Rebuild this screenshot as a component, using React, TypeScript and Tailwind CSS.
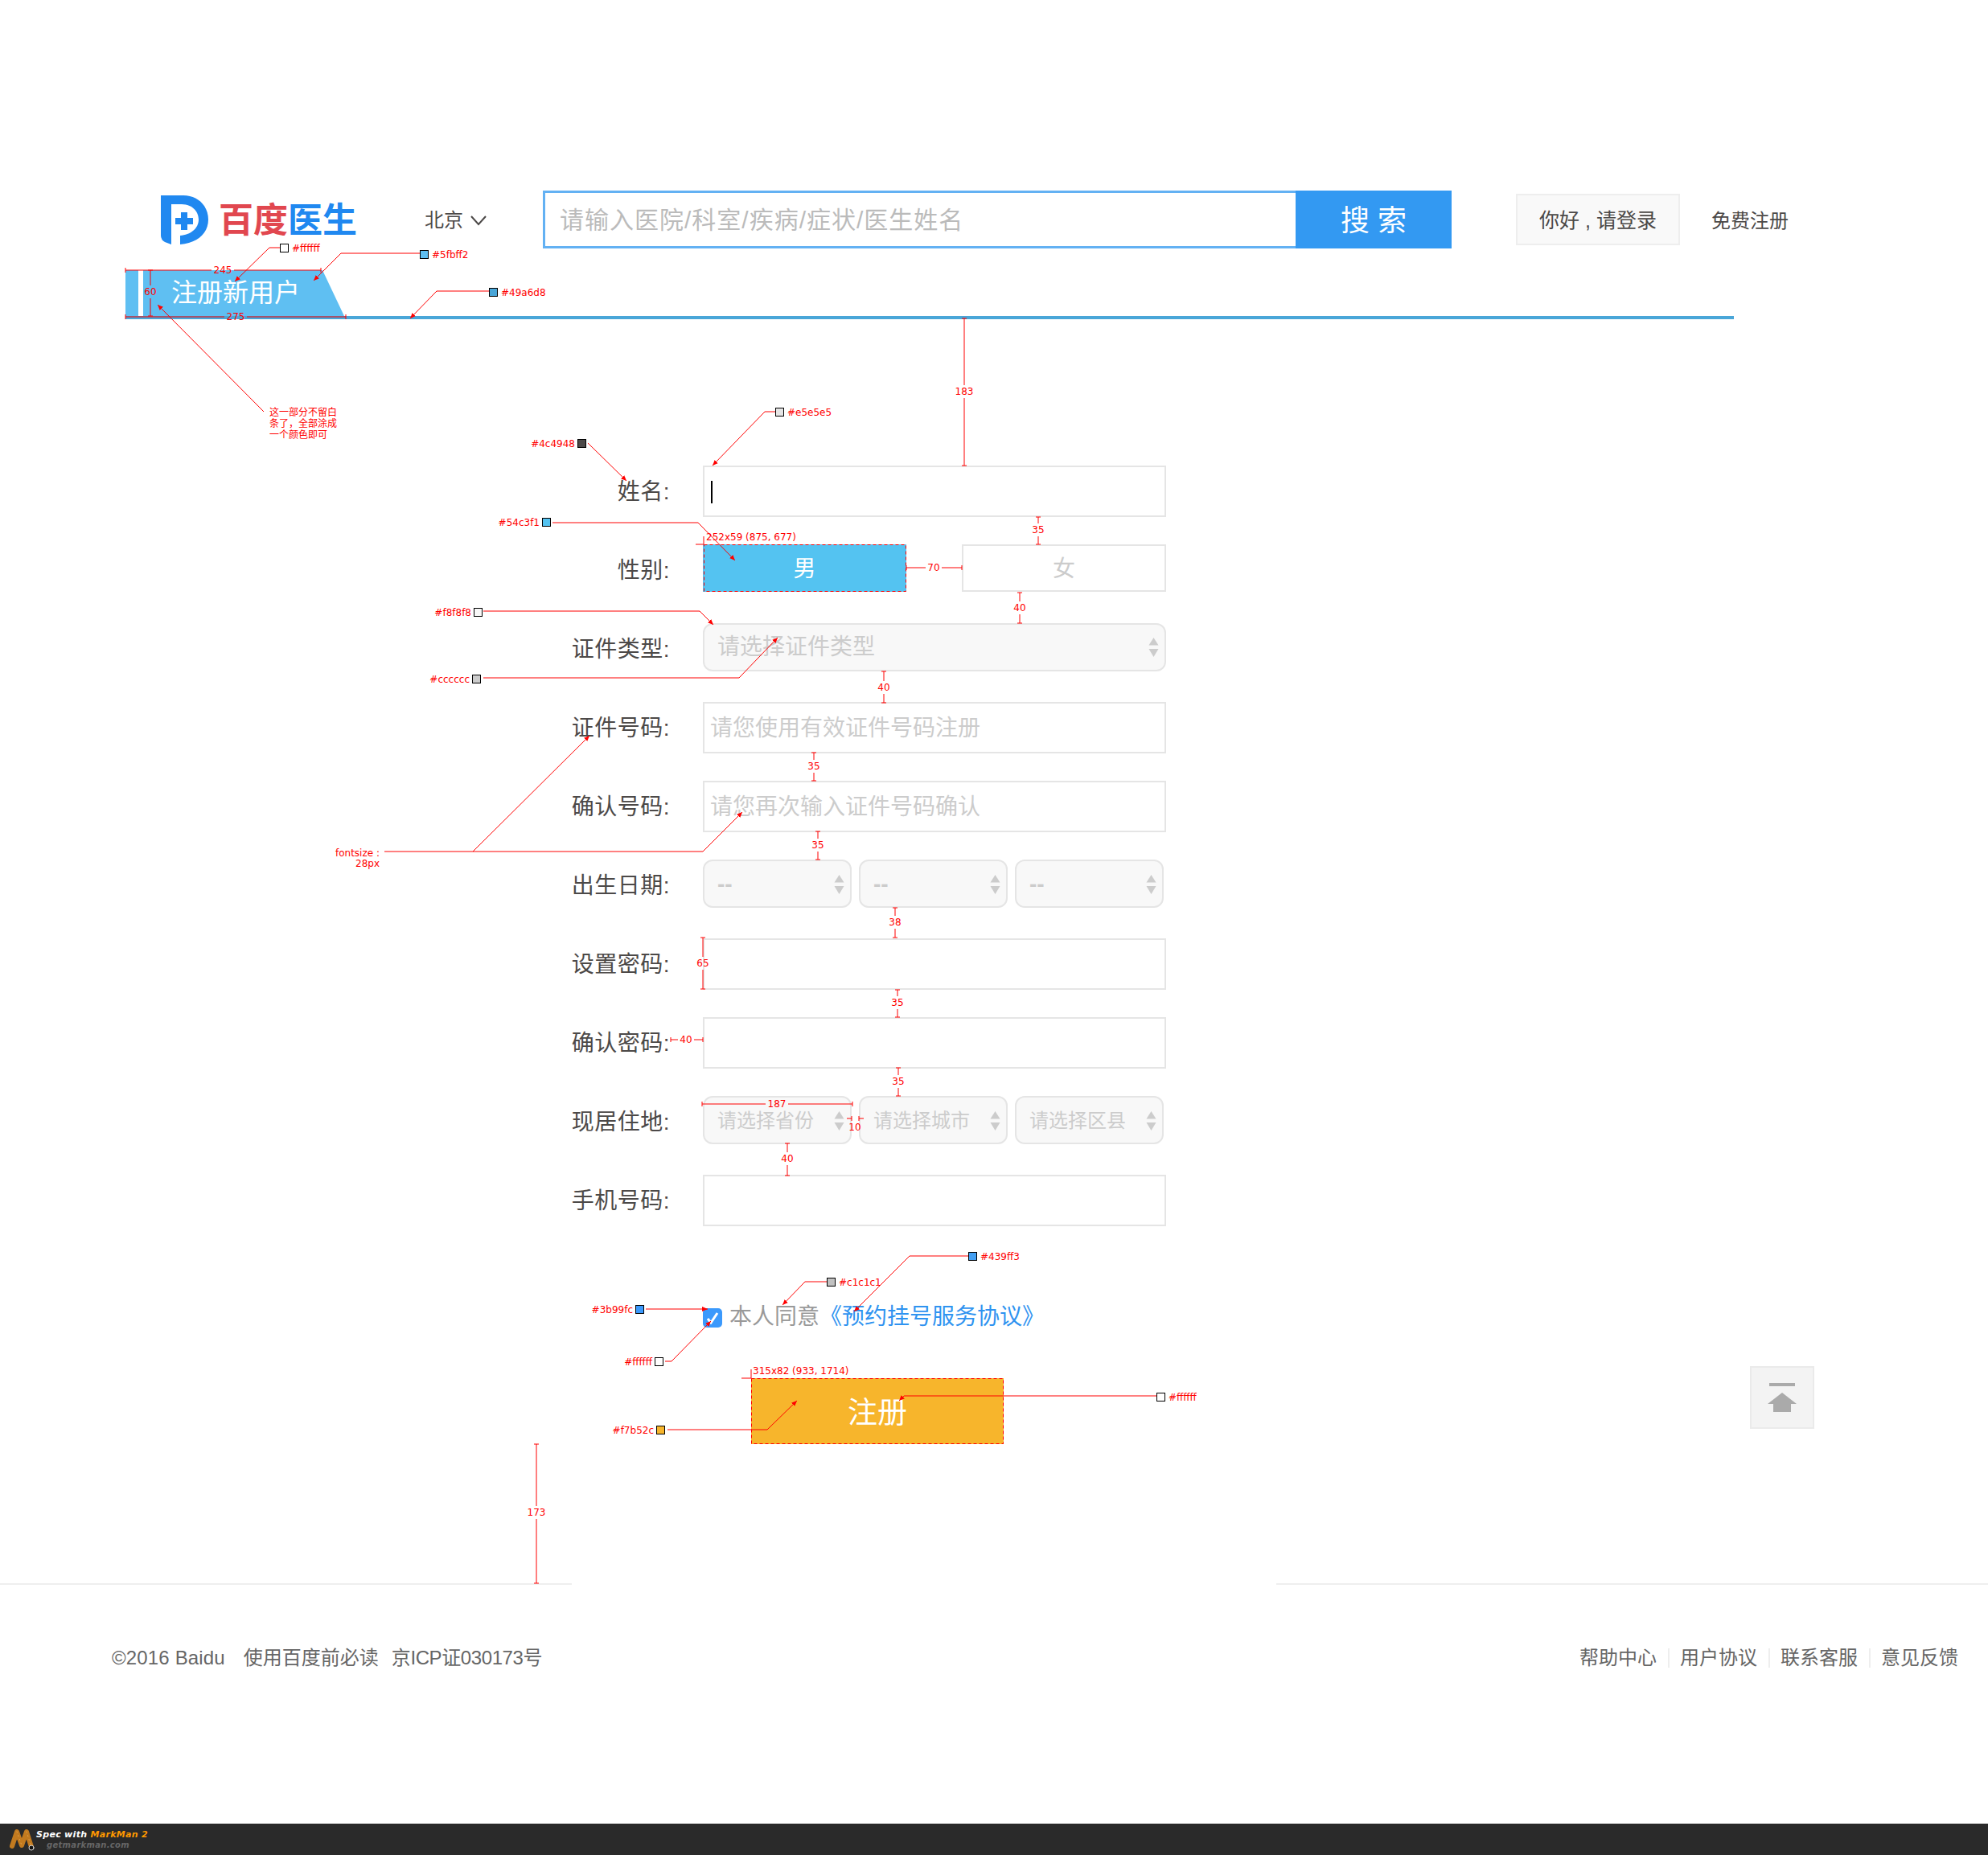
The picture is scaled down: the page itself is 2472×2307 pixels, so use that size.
const swatches: [number, number, string, "l" | "r"][] = [
  [348, 303, "#ffffff", "r"],
  [522, 311, "#5fbff2", "r"],
  [608, 358, "#49a6d8", "r"],
  [964, 507, "#e5e5e5", "r"],
  [718, 546, "#4c4948", "l"],
  [674, 644, "#54c3f1", "l"],
  [589, 756, "#f8f8f8", "l"],
  [587, 839, "#cccccc", "l"],
  [1204, 1557, "#439ff3", "r"],
  [1028, 1589, "#c1c1c1", "r"],
  [790, 1623, "#3b99fc", "l"],
  [814, 1688, "#ffffff", "l"],
  [816, 1773, "#f7b52c", "l"],
  [1438, 1732, "#ffffff", "r"],
];

const leads = [
  "348,308 335,308 292,350",
  "522,315 424,315 390,349",
  "608,362 543,362 510,396",
  "964,512 951,512 886,579",
  "731,551 779,598",
  "687,650 868,650 914,697",
  "601,760 870,760 887,777",
  "601,843 919,843 967,793",
  "478,1059 874,1059 923,1010",
  "588,1059 733,915",
  "1204,1562 1131,1562 1062,1631",
  "1028,1594 1001,1594 973,1623",
  "803,1628 880,1628",
  "827,1693 835,1693 884,1643",
  "830,1778 954,1778 991,1742",
  "1438,1736 1124,1736 1118,1742",
  "328,512 196,379",
];

// vertical: [x, y1, y2, label, labelY]
const vMeasures: [number, number, number, string, number][] = [
  [187, 336, 393, "60", 363],
  [1199, 396, 579, "183", 487],
  [1291, 643, 677, "35", 659],
  [1268, 737, 775, "40", 756],
  [1099, 835, 874, "40", 855],
  [1012, 936, 971, "35", 953],
  [1017, 1034, 1069, "35", 1051],
  [1113, 1129, 1166, "38", 1147],
  [874, 1166, 1230, "65", 1198],
  [1116, 1231, 1265, "35", 1247],
  [1117, 1328, 1363, "35", 1345],
  [979, 1422, 1462, "40", 1441],
  [667, 1796, 1969, "173", 1881],
];

// horizontal: [y, x1, x2, label, labelX]
const hMeasures: [number, number, number, string, number][] = [
  [336, 156, 399, "245", 277],
  [394, 156, 430, "275", 293],
  [706, 1127, 1196, "70", 1161],
  [1293, 834, 874, "40", 853],
  [1373, 873, 1060, "187", 966],
];

function VMeasure({ x, y1, y2, label, ly }: { x: number; y1: number; y2: number; label: string; ly: number }) {
  return (
    <g>
      <path d={`M${x - 3} ${y1}H${x + 3}M${x - 3} ${y2}H${x + 3}M${x} ${y1}V${ly - 8}M${x} ${ly + 8}V${y2}`} stroke="#f00" fill="none" />
      <text x={x} y={ly} textAnchor="middle" dominantBaseline="central" fill="#f00" fontSize="12">
        {label}
      </text>
    </g>
  );
}

function HMeasure({ y, x1, x2, label, lx }: { y: number; x1: number; x2: number; label: string; lx: number }) {
  const half = label.length * 4 + 2;
  return (
    <g>
      <path d={`M${x1} ${y - 3}V${y + 3}M${x2} ${y - 3}V${y + 3}M${x1} ${y}H${lx - half}M${lx + half} ${y}H${x2}`} stroke="#f00" fill="none" />
      <text x={lx} y={y} textAnchor="middle" dominantBaseline="central" fill="#f00" fontSize="12">
        {label}
      </text>
    </g>
  );
}

function Annotations() {
  return (
    <svg
      className="pointer-events-none absolute left-0 top-0 font-['DejaVu_Sans','Noto_Sans_CJK_SC',sans-serif]"
      width="2472"
      height="2307"
      viewBox="0 0 2472 2307"
    >
      <defs>
        <marker id="tip" markerWidth="8" markerHeight="8" refX="7" refY="3" orient="auto">
          <path d="M0 0L7 3L0 6Z" fill="#f00" />
        </marker>
      </defs>
      {leads.map((pts) => (
        <polyline key={pts} points={pts} fill="none" stroke="#f00" markerEnd="url(#tip)" />
      ))}
      {swatches.map(([x, y, color, side]) => (
        <g key={`${x}-${y}`}>
          <rect x={x + 0.5} y={y + 0.5} width="10" height="10" fill={color} stroke="#000" />
          <text
            x={side === "r" ? x + 15 : x - 3}
            y={y + 6}
            textAnchor={side === "r" ? "start" : "end"}
            dominantBaseline="central"
            fill="#f00"
            fontSize="12"
          >
            {color}
          </text>
        </g>
      ))}
      {vMeasures.map(([x, y1, y2, label, ly]) => (
        <VMeasure key={`${x}-${y1}`} x={x} y1={y1} y2={y2} label={label} ly={ly} />
      ))}
      {hMeasures.map(([y, x1, x2, label, lx]) => (
        <HMeasure key={`${y}-${x1}`} y={y} x1={x1} x2={x2} label={label} lx={lx} />
      ))}

      {/* 10px gap between the address selects */}
      <path d="M1053 1391H1059M1059 1388V1394M1068 1388V1394M1068 1391H1074" stroke="#f00" fill="none" />
      <text x="1063" y="1402" textAnchor="middle" dominantBaseline="central" fill="#f00" fontSize="12">10</text>

      {/* selection boxes */}
      <rect x="875.5" y="677.5" width="251" height="58" fill="none" stroke="#f00" strokeDasharray="4 3" />
      <path d="M875 667V677M865 677H875" stroke="#f00" fill="none" />
      <text x="878" y="668" dominantBaseline="central" fill="#f00" fontSize="12">252x59 (875, 677)</text>
      <rect x="934.5" y="1714.5" width="313" height="81" fill="none" stroke="#f00" strokeDasharray="4 3" />
      <path d="M934 1703V1714M922 1714H934" stroke="#f00" fill="none" />
      <text x="936" y="1705" dominantBaseline="central" fill="#f00" fontSize="12">315x82 (933, 1714)</text>

      {/* notes */}
      <text x="335" y="513" dominantBaseline="central" fill="#f00" fontSize="12">这一部分不留白</text>
      <text x="335" y="527" dominantBaseline="central" fill="#f00" fontSize="12">条了，全部涂成</text>
      <text x="335" y="541" dominantBaseline="central" fill="#f00" fontSize="12">一个颜色即可</text>
      <text x="472" y="1061" textAnchor="end" dominantBaseline="central" fill="#f00" fontSize="12">fontsize :</text>
      <text x="472" y="1074" textAnchor="end" dominantBaseline="central" fill="#f00" fontSize="12">28px</text>
    </svg>
  );
}

function SelectArrows() {
  return (
    <svg width="13" height="24" viewBox="0 0 13 24" className="shrink-0">
      <path d="M6.5 0L12.5 9.500H0.500Z" fill="#ccc" />
      <path d="M6.5 24L12.500 14H0.500Z" fill="#ccc" />
    </svg>
  );
}

function Select({ text, className }: { text: string; className: string }) {
  return (
    <div
      className={`flex h-[60px] items-center justify-between rounded-[12px] border-2 border-[#e5e5e5] bg-[#f8f8f8] pl-[16px] pr-[7px] text-[#ccc] ${className}`}
    >
      <span>{text}</span>
      <SelectArrows />
    </div>
  );
}

function TextBox({ placeholder, caret }: { placeholder?: string; caret?: boolean }) {
  return (
    <div className="flex h-[64px] w-[576px] items-center border-2 border-[#e5e5e5] bg-white pl-[7px] pt-[1px] text-[28px] text-[#ccc]">
      {caret && <span className="ml-[1px] h-[28px] w-[2px] bg-black" />}
      {placeholder}
    </div>
  );
}

function Row({ label, children }: { label: string; children: React.ReactNode }) {
  return (
    <div className="flex h-[98px] items-start">
      <label className="flex h-[64px] w-[833px] items-center justify-end pt-[2px] text-[28px] tracking-[0.5px] text-[#4c4948]">
        {label}:
      </label>
      <div className="ml-[41px]">{children}</div>
    </div>
  );
}

function Logo() {
  return (
    <div className="flex w-[328px] items-center">
      <svg width="59" height="61" viewBox="0 0 59 61">
        <path
          d="M0 0H28C46 0 59 13 59 30C59 47 46 59 24 61V50C37 49 47 41 47 30C47 19 38 11 26 11H13V61L5 58Q0 55 0 50Z"
          fill="#2088f0"
        />
        <path d="M18 28H25V21H33V28H40V36H33V43H25V36H18Z" fill="#2088f0" />
      </svg>
      <span className="ml-[13px] pt-[2px] text-[43px] font-bold leading-none text-[#e1474f]">
        百度<span className="text-[#2088f0]">医生</span>
      </span>
    </div>
  );
}

function Header() {
  return (
    <div className="mt-[237px] flex h-[72px] items-center pl-[200px]">
      <Logo />
      <div className="flex w-[147px] items-center pt-[2px] text-[24px] text-[#4c4948]">
        北京
        <svg width="20" height="13" viewBox="0 0 20 13" className="ml-[9px]" fill="none" stroke="#4c4948" strokeWidth="2">
          <path d="M1 1L10 11L19 1" />
        </svg>
      </div>
      <div className="flex h-[72px] w-[1130px] border-[3px] border-[#63b1f3]">
        <div className="flex flex-1 items-center bg-white pl-[18px] pt-[1px] text-[30px] tracking-[1px] text-[#bbb]">
          请输入医院/科室/疾病/症状/医生姓名
        </div>
        <button className="-my-[3px] -mr-[3px] w-[194px] bg-[#3399f2] pt-[3px] text-[36px] text-white">搜 索</button>
      </div>
      <button className="ml-[80px] h-[64px] w-[204px] border-2 border-[#eee] bg-[#f9f9f9] pt-[3px] text-[25px] text-[#4c4948]">
        你好 , 请登录
      </button>
      <span className="ml-[39px] pt-[3px] text-[24px] text-[#4c4948]">免费注册</span>
    </div>
  );
}

function Banner() {
  return (
    <div className="ml-[156px] mt-[27px] h-[61px] w-[2000px] border-b-4 border-[#49a6d8]">
      <div className="flex h-[57px] w-[272px] items-center bg-[#5fbff2] pb-[1px] pl-[16px] [clip-path:polygon(0_0,245px_0,100%_100%,0_100%)]">
        <span className="h-[57px] w-[6px] bg-white" />
        <span className="ml-[35px] text-[32px] text-white">注册新用户</span>
      </div>
    </div>
  );
}

function Form() {
  return (
    <div className="mt-[182px]">
      <Row label="姓名">
        <TextBox caret />
      </Row>
      <Row label="性别">
        <div className="flex gap-[69px]">
          <div className="flex h-[59px] w-[253px] items-center justify-center bg-[#54c3f1] pt-[3px] text-[28px] text-white">男</div>
          <div className="flex h-[59px] w-[254px] items-center justify-center border-2 border-[#e5e5e5] pt-[2px] text-[28px] text-[#ccc]">女</div>
        </div>
      </Row>
      <Row label="证件类型">
        <Select text="请选择证件类型" className="w-[576px] text-[28px]" />
      </Row>
      <Row label="证件号码">
        <TextBox placeholder="请您使用有效证件号码注册" />
      </Row>
      <Row label="确认号码">
        <TextBox placeholder="请您再次输入证件号码确认" />
      </Row>
      <Row label="出生日期">
        <div className="flex gap-[9px]">
          <Select text="--" className="w-[185px] pt-[1px] text-[28px] font-bold" />
          <Select text="--" className="w-[185px] pt-[1px] text-[28px] font-bold" />
          <Select text="--" className="w-[185px] pt-[1px] text-[28px] font-bold" />
        </div>
      </Row>
      <Row label="设置密码">
        <TextBox />
      </Row>
      <Row label="确认密码">
        <TextBox />
      </Row>
      <Row label="现居住地">
        <div className="flex gap-[9px]">
          <Select text="请选择省份" className="w-[185px] pt-[1px] text-[24px]" />
          <Select text="请选择城市" className="w-[185px] pt-[1px] text-[24px]" />
          <Select text="请选择区县" className="w-[185px] pt-[1px] text-[24px]" />
        </div>
      </Row>
      <Row label="手机号码">
        <TextBox />
      </Row>

      <div className="ml-[874px] mt-[68px] flex h-[24px] items-center text-[28px]">
        <span className="flex h-[24px] w-[24px] items-center justify-center rounded-[5px] bg-[#3b99fc]">
          <svg width="16" height="16" viewBox="0 0 16 16" fill="none" stroke="#fff" strokeWidth="3">
            <path d="M2 9L6 14L14 2" />
          </svg>
        </span>
        <span className="ml-[9px] -mt-[2px] text-[#999]">本人同意</span>
        <span className="-mt-[2px] text-[#2f93f0]">《预约挂号服务协议》</span>
      </div>

      <button className="ml-[934px] mt-[63px] block h-[82px] w-[314px] bg-[#f7b52c] pt-[5px] text-[37px] text-white">注册</button>
    </div>
  );
}

function Footer() {
  return (
    <div className="flex flex-1 flex-col">
      <div className="mt-[173px] flex justify-between">
        <div className="h-[2px] w-[711px] bg-[#eee]" />
        <div className="h-[2px] w-[885px] bg-[#eee]" />
      </div>
      <div className="mt-[74px] flex items-center justify-between pl-[139px] pr-[37px] text-[24px] leading-[34px] text-[#666]">
        <div className="flex">
          <span className="tracking-[0.15px]">©2016 Baidu</span>
          <span className="ml-[23px]">使用百度前必读</span>
          <span className="ml-[16px] tracking-[-0.4px]">京ICP证030173号</span>
        </div>
        <div className="flex items-center gap-[13.5px]">
          <span>帮助中心</span>
          <span className="h-[24px] w-[2px] bg-[#eee]" />
          <span>用户协议</span>
          <span className="h-[24px] w-[2px] bg-[#eee]" />
          <span>联系客服</span>
          <span className="h-[24px] w-[2px] bg-[#eee]" />
          <span>意见反馈</span>
        </div>
      </div>
    </div>
  );
}

function SpecBar() {
  return (
    <div className="flex h-[39px] items-center bg-[#2a2a2a] pl-[12px] font-['DejaVu_Sans',sans-serif] text-[11px] font-bold italic leading-[13px] tracking-[0.3px]">
      <svg width="32" height="28" viewBox="0 0 32 28" fill="none" strokeLinecap="round">
        <path d="M3 22L9 4L15 21L21 4L27 23" stroke="#c27a1f" strokeWidth="6" strokeLinejoin="round" />
        <path d="M9 4L15 21M21 4L27 23" stroke="#e2a24a" strokeWidth="1" strokeDasharray="1 4" />
        <circle cx="27" cy="24" r="3" fill="#111" stroke="#ddd" />
      </svg>
      <div className="ml-[1px] mt-[1px] flex flex-col">
        <span className="whitespace-pre text-white">
          Spec with <span className="text-[#f90]">MarkMan 2</span>
        </span>
        <span className="pl-[13px] text-[10px] text-[#666]">getmarkman.com</span>
      </div>
    </div>
  );
}

function BackToTop() {
  return (
    <div className="absolute left-[2176px] top-[1699px] flex h-[78px] w-[80px] items-center justify-center border-2 border-[#eaeaea] bg-[#f3f3f3] pt-[1px]">
      <svg width="36" height="38" viewBox="0 0 36 38" fill="#aaa">
        <rect x="2" y="0" width="32" height="4" />
        <path d="M18 12L36 26H29V36H7V26H0Z" />
      </svg>
    </div>
  );
}

export default function App() {
  return (
    <div className="relative flex h-[2307px] w-[2472px] flex-col overflow-hidden bg-white font-['Liberation_Sans','Noto_Sans_CJK_SC',sans-serif]">
      <Header />
      <Banner />
      <Form />
      <Footer />
      <SpecBar />
      <BackToTop />
      <Annotations />
    </div>
  );
}
